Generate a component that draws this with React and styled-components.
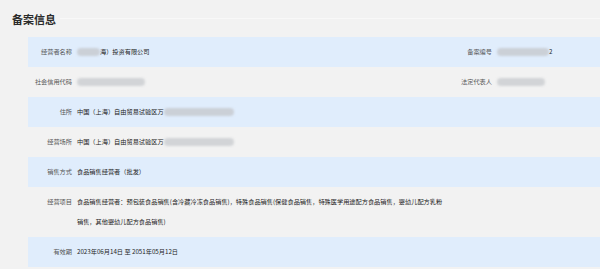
import styled, { createGlobalStyle } from "styled-components"

const GlobalStyle = createGlobalStyle`
  html, body {
    margin: 0;
    padding: 0;
    background: #f2f2f2;
    font-family: "Noto Sans CJK SC", "Noto Sans", sans-serif;
  }
`

const Page = styled.div`
  width: 600px;
  height: 269px;
  overflow: hidden;
  background: #f2f2f2;
`

const Header = styled.div`
  height: 37px;
  display: flex;
  align-items: center;
  padding-left: 12px;
  gap: 4px;
`

const Title = styled.h2`
  margin: 0;
  font-size: 11px;
  font-weight: 700;
  color: #2b2b2b;
`

const TitleLine = styled.div`
  flex: 1;
  height: 1px;
  background: #f8f8f8;
  margin-bottom: 1px;
`

const Table = styled.div`
  margin-left: 28px;
  display: flex;
  flex-direction: column;
`

const Row = styled.div`
  display: grid;
  grid-template-columns: 420px 1fr;
  padding: 5px 0;
  background: ${(props) => (props.blue ? "#e0edfc" : "#f2f2f2")};
  min-height: 20px;
`

const Cell = styled.div`
  display: flex;
  align-items: flex-start;
  gap: 5px;
  font-size: 6.2px;
  line-height: 20px;
`

const Label = styled.div`
  flex: 0 0 44px;
  text-align: right;
  color: #555;
  white-space: nowrap;
`

const Value = styled.div`
  flex: 1;
  color: #222;
`

const Masked = styled.span`
  display: inline-block;
  vertical-align: middle;
  height: 8px;
  width: ${(props) => props.w}px;
  border-radius: 4px;
  background: ${(props) => props.tone || "#cbd0d7"};
  filter: blur(1px);
  color: transparent;
  overflow: hidden;
  line-height: 8px;
`

function App() {
  return (
    <Page>
      <GlobalStyle />
      <Header>
        <Title>备案信息</Title>
        <TitleLine />
      </Header>
      <Table>
        <Row blue>
          <Cell>
            <Label>经营者名称</Label>
            <Value>
              <Masked w={23}>某某(上</Masked>海）投资有限公司
            </Value>
          </Cell>
          <Cell>
            <Label>备案编号</Label>
            <Value>
              <Masked w={52}>JY1310000000000</Masked>2
            </Value>
          </Cell>
        </Row>
        <Row>
          <Cell>
            <Label>社会信用代码</Label>
            <Value>
              <Masked w={68} tone="#d2d4d7">91310000000000000X</Masked>
            </Value>
          </Cell>
          <Cell>
            <Label>法定代表人</Label>
            <Value>
              <Masked w={48} tone="#d2d4d7">某某某某</Masked>
            </Value>
          </Cell>
        </Row>
        <Row blue>
          <Cell>
            <Label>住所</Label>
            <Value>
              中国（上海）自由贸易试验区万
              <Masked w={70}>某某路某某号某某室</Masked>
            </Value>
          </Cell>
          <Cell />
        </Row>
        <Row>
          <Cell>
            <Label>经营场所</Label>
            <Value>
              中国（上海）自由贸易试验区万
              <Masked w={70} tone="#d2d4d7">某某路某某号某某室</Masked>
            </Value>
          </Cell>
          <Cell />
        </Row>
        <Row blue>
          <Cell>
            <Label>销售方式</Label>
            <Value>食品销售经营者（批发）</Value>
          </Cell>
          <Cell />
        </Row>
        <Row>
          <Cell>
            <Label>经营项目</Label>
            <Value>
              食品销售经营者：预包装食品销售(含冷藏冷冻食品销售)，特殊食品销售(保健食品销售，特殊医学用途配方食品销售，婴幼儿配方乳粉销售，其他婴幼儿配方食品销售)
            </Value>
          </Cell>
          <Cell />
        </Row>
        <Row blue>
          <Cell>
            <Label>有效期</Label>
            <Value>2023年06月14日 至 2051年05月12日</Value>
          </Cell>
          <Cell />
        </Row>
      </Table>
    </Page>
  )
}

export default App
